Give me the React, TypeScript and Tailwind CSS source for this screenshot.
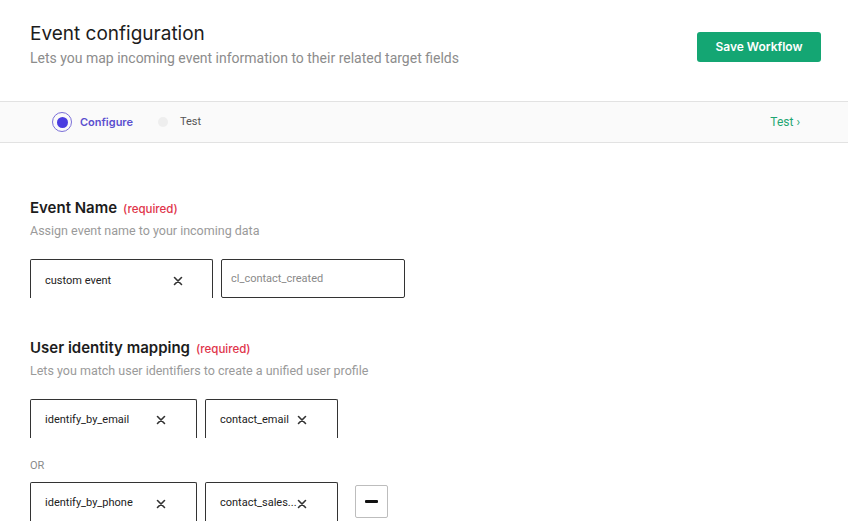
import React from "react";

const sans = { fontFamily: "Roboto, 'Liberation Sans', sans-serif" };

function XIcon() {
  return (
    <svg width="10" height="10" viewBox="0 0 10 10" className="shrink-0">
      <path d="M1.5 1.5 L8.5 8.5 M8.5 1.5 L1.5 8.5" stroke="#333" strokeWidth="1.6" strokeLinecap="round" />
    </svg>
  );
}

// Chip-like select box: border on three sides only
function Chip({ label, width, xGap }: { label: string; width: string; xGap: string }) {
  return (
    <div
      className={`${width} h-[39px] flex items-center pl-[14px] pt-[3px] border-t border-x border-[#333] rounded-t-[2px] text-[11px] text-[#222]`}
    >
      <span className={`${xGap} whitespace-nowrap`}>{label}</span>
      <XIcon />
    </div>
  );
}

function Section({ title, desc }: { title: string; desc: string }) {
  return (
    <div>
      <div className="flex items-baseline gap-[6px]">
        <span className="text-[15px] font-semibold text-[#1c1c1c]" style={{ fontFamily: "Inter, sans-serif" }}>
          {title}
        </span>
        <span className="text-[11.5px] font-medium text-[#e0344a]" style={{ fontFamily: "Inter, sans-serif" }}>
          (required)
        </span>
      </div>
      <div className="text-[12.5px] text-[#9a9a9a] mt-[2px]" style={sans}>
        {desc}
      </div>
    </div>
  );
}

export default function App() {
  return (
    <div className="w-[848px] h-[527px] overflow-hidden bg-white" style={sans}>
      {/* --- HEADER --- */}
      <div className="h-[101px] flex items-start justify-between pl-[30px] pr-[27px] pt-[22px]">
        <div>
          <div className="text-[19px] text-[#1c1c1c] leading-[24px]" style={{ fontFamily: "Inter, sans-serif" }}>
            Event configuration
          </div>
          <div className="text-[14px] text-[#8c8c8c] mt-[2px]">
            Lets you map incoming event information to their related target fields
          </div>
        </div>
        <button
          className="mt-[10px] w-[124px] h-[30px] rounded-[3px] bg-[#14a673] text-white text-[12px] font-semibold"
          style={{ fontFamily: "Inter, sans-serif" }}
        >
          Save Workflow
        </button>
      </div>

      {/* --- STEPPER --- */}
      <div className="h-[42px] bg-[#fafafa] border-y border-[#e2e2e2] flex items-center justify-between pl-[52px] pr-[48px]">
        <div className="flex items-center">
          <div className="w-[20px] h-[20px] rounded-full border-[1.5px] border-[#7b6fd8] flex items-center justify-center">
            <div className="w-[11px] h-[11px] rounded-full bg-[#4a3de0]" />
          </div>
          <span className="ml-[8px] text-[11px] font-semibold text-[#5a4fcf]" style={{ fontFamily: "Inter, sans-serif" }}>
            Configure
          </span>
          <div className="ml-[25px] w-[10px] h-[10px] rounded-full bg-[#eeeeee]" />
          <span className="ml-[12px] text-[11px] text-[#555]">Test</span>
        </div>
        <span className="text-[12px] text-[#1ea672]">Test ›</span>
      </div>

      {/* --- FORM --- */}
      <div className="pl-[30px] pt-[54px]">
        <Section title="Event Name" desc="Assign event name to your incoming data" />
        <div className="flex gap-[8px] mt-[19px]">
          <Chip label="custom event" width="w-[183px]" xGap="w-[128px]" />
          <div className="w-[184px] h-[39px] flex items-center px-[9px] border border-[#333] rounded-[2px] text-[11px] text-[#8a8a8a]">
            cl_contact_created
          </div>
        </div>

        <div className="mt-[39px]">
          <Section title="User identity mapping" desc="Lets you match user identifiers to create a unified user profile" />
        </div>
        <div className="flex gap-[8px] mt-[18px]">
          <Chip label="identify_by_email" width="w-[167px]" xGap="w-[111px]" />
          <Chip label="contact_email" width="w-[133px]" xGap="w-[77px]" />
        </div>
        <div className="text-[11px] text-[#8a8a8a] mt-[20px]">OR</div>
        <div className="flex items-start gap-[8px] mt-[8px]">
          <Chip label="identify_by_phone" width="w-[167px]" xGap="w-[111px]" />
          <Chip label="contact_sales..." width="w-[133px]" xGap="w-[77px]" />
          <button className="ml-[9px] mt-[3px] w-[33px] h-[33px] border border-[#bdbdbd] rounded-[2px] flex items-center justify-center">
            <div className="w-[13px] h-[3px] bg-[#111] rounded-[1px]" />
          </button>
        </div>
      </div>
    </div>
  );
}
